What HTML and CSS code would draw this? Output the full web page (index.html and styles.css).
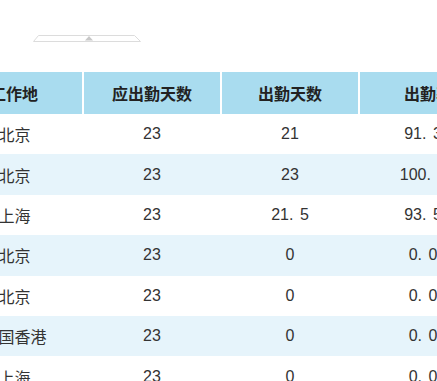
FILE: index.html
```html
<!DOCTYPE html>
<html lang="zh">
<head>
<meta charset="utf-8">
<link rel="stylesheet" href="styles.css">
</head>
<body>
<div class="handle">
  <svg width="110" height="8" viewBox="0 0 110 8">
    <polygon points="5.5,1.5 101.5,1.5 107.5,7.5 0.5,7.5" fill="none" stroke="#dcdcdc" stroke-width="1"/>
    <polygon points="52,6.5 56,2 60,6.5" fill="#c8c8c8"/>
  </svg>
</div>
<table class="grid">
  <thead>
    <tr><th>工作地</th><th>应出勤天数</th><th>出勤天数</th><th>出勤率</th></tr>
  </thead>
  <tbody>
    <tr><td>北京</td><td>23</td><td>21</td><td>91<span class="dot">.</span>30</td></tr>
    <tr class="alt"><td>北京</td><td>23</td><td>23</td><td>100<span class="dot">.</span>00</td></tr>
    <tr><td>上海</td><td>23</td><td>21<span class="dot">.</span>5</td><td>93<span class="dot">.</span>50</td></tr>
    <tr class="alt"><td>北京</td><td>23</td><td>0</td><td>0<span class="dot">.</span>00</td></tr>
    <tr><td>北京</td><td>23</td><td>0</td><td>0<span class="dot">.</span>00</td></tr>
    <tr class="alt"><td>中国香港</td><td>23</td><td>0</td><td>0<span class="dot">.</span>00</td></tr>
    <tr><td>上海</td><td>23</td><td>0</td><td>0<span class="dot">.</span>00</td></tr>
  </tbody>
</table>
</body>
</html>
```
FILE: styles.css
```css
html, body {
  margin: 0;
  padding: 0;
  background: #fff;
  overflow: hidden;
}
body {
  width: 437px;
  height: 381px;
  font-family: "Liberation Sans", "Noto Sans CJK SC", sans-serif;
  color: #333;
}
.handle {
  margin: 34px 0 0 33px;
  height: 8px;
  line-height: 0;
}
.grid {
  margin: 30px 0 0 -54px;
  border-collapse: collapse;
  table-layout: fixed;
  width: 550px;
}
.grid th, .grid td {
  width: 136px;
  text-align: center;
  padding: 0;
}
.grid th {
  height: 42px;
  background: #a9dcef;
  font-size: 16px;
  font-weight: bold;
  color: #222;
  border-left: 2px solid #fff;
}
.grid th:first-child {
  border-left: none;
}
.grid td {
  height: 40.4px;
  font-size: 16px;
}
.grid tr.alt td {
  background: #e6f4fb;
}
.dot {
  margin-right: 6.5px;
}
```
